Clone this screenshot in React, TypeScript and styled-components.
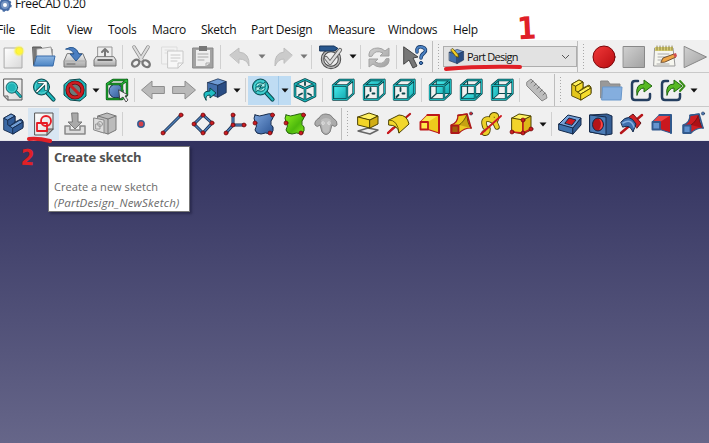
import React from 'react';
import styled, { createGlobalStyle } from 'styled-components';

const Global = createGlobalStyle`
  * { box-sizing: border-box; }
  body { margin: 0; overflow: hidden; background: #fff; font-family: "Open Sans", "Noto Sans", sans-serif; }
`;
const Window = styled.div`
  position: relative; width: 709px; height: 443px; overflow: hidden;
  display: flex; flex-direction: column; background: #fff;
`;
const TitleBar = styled.header`
  height: 19px; flex: none; display: flex; align-items: flex-start; overflow: hidden;
  font-size: 12px; line-height: 16px; letter-spacing: -0.4px; color: #111;
  svg { flex: none; margin: -7px 3px 0 -8px; }
  span { margin-top: -4px; }
`;
const MenuBar = styled.nav`
  height: 21px; flex: none; display: flex; align-items: center; margin-left: -3px;
`;
const MenuItem = styled.span<{ $w: number }>`
  flex: none; width: ${p => p.$w}px; font-size: 12px; line-height: 20px;
  letter-spacing: -0.27px; color: #111; white-space: nowrap;
`;
const Toolbar = styled.div<{ $h: number; $last?: boolean }>`
  height: ${p => p.$h}px; flex: none; display: flex; align-items: center;
  padding-top: 1px; background: #f0f0f0; border-bottom: 1px solid ${p => (p.$last ? '#e4e4ea' : '#c9c9c9')}; white-space: nowrap;
`;
const Lead = styled.div`flex: none; width: 0; margin-left: -3px;`;
const Slot = styled.button<{ $w: number; $tone?: string }>`
  flex: none; width: ${p => p.$w}px; height: 100%; padding: 0; border: 0;
  background: ${p => p.$tone ?? 'transparent'};
  display: flex; align-items: center; justify-content: center;
  svg { flex: none; display: block; overflow: visible; }
`;
const Split = styled.div`
  flex: none; display: flex; height: 29px; background: #bfdcf3;
  & > * + * { border-left: 1px solid #9fc8e8; }
`;
const Separator = styled.i<{ $w: number }>`
  flex: none; width: ${p => p.$w}px; height: 24px; display: flex; justify-content: center;
  &::before { content: ""; width: 1px; background: #d0d0d0; }
`;
const Edge = styled.i`flex: none; width: 1px; height: 100%; background: #bdbdbd;`;
const Grip = styled.i<{ $w: number }>`
  flex: none; width: ${p => p.$w}px; height: 26px; display: flex; justify-content: center;
  &::before { content: ""; width: 1px; background: repeating-linear-gradient(#a8a8a8 0 1px, #f0f0f0 1px 3px); }
`;
const Workbench = styled.button`
  flex: none; width: 134px; height: 21px; display: flex; align-items: center; padding: 0 6px 0 4px;
  border: 1px solid #adadad; background: #e2e2e2; color: #111;
  font: 11px "Open Sans", "Noto Sans", sans-serif; letter-spacing: -0.75px;
  span { flex: 1; text-align: left; margin-left: 2px; }
  svg { flex: none; }
`;
const Viewport = styled.main`flex: 1; background: linear-gradient(#32325f, #666689);`;
const Tooltip = styled.aside`
  position: absolute; left: 48px; top: 146px; width: 142px; height: 66px; padding: 2px 0 0 5px;
  background: #fff; border: 1px solid #777; box-shadow: 2px 2px 2px #20204099;
  color: #6a6a6a; white-space: nowrap; font-size: 11px; line-height: 16px;
  h3 { margin: 0 0 13px; font-size: 13px; line-height: 17px; letter-spacing: -0.17px; color: #505050; }
  p { margin: 0; letter-spacing: 0.05px; }
  em { display: block; font-size: 11.5px; letter-spacing: 0.2px; line-height: 15px; }
`;
const Note = styled.b<{ $x: number; $y: number; $size: number; $turn: number }>`
  position: absolute; left: ${p => p.$x}px; top: ${p => p.$y}px; font-size: ${p => p.$size}px; line-height: 1;
  font-family: "DejaVu Sans", sans-serif; color: #e02027; transform: rotate(${p => p.$turn}deg) scaleX(.88);
`;
const Marks = styled.svg`position: absolute; left: 0; top: 0; pointer-events: none;`;
const Defs = styled.svg`position: absolute; width: 0; height: 0;`;

type Kids = { children?: React.ReactNode; size?: number };
const Ic = ({ children, size = 24 }: Kids) => (
  <svg width={size} height={size} viewBox="0 0 24 24" fill="none" strokeLinejoin="round" strokeLinecap="round">{children}</svg>
);
const Tool = ({ w, tone, children }: { w: number; tone?: string; children: React.ReactNode }) => (
  <Slot $w={w} $tone={tone}><Ic>{children}</Ic></Slot>
);
const Drop = ({ w, color = '#111' }: { w: number; color?: string }) => (
  <Slot $w={w}><svg width="8" height="5"><path d="M.5.5h7L4 4.5z" fill={color} /></svg></Slot>
);

const T = '#1bb6ba';
const TD = '#0b464b';
const BLUE = '#3f6fae';
const BD = '#14294a';
const YD = '#4d4200';
const RED = '#cc1c22';

const Gradients = () => (
  <Defs>
    <defs>
      <linearGradient id="sheet" x2="1" y2="1"><stop stopColor="#fff" /><stop offset="1" stopColor="#d8d8d8" /></linearGradient>
      <linearGradient id="metal" x2="0" y2="1"><stop stopColor="#efefef" /><stop offset="1" stopColor="#a5a5a5" /></linearGradient>
      <linearGradient id="grey" x2="1" y2="1"><stop stopColor="#d0d0d0" /><stop offset="1" stopColor="#a2a2a2" /></linearGradient>
      <linearGradient id="folder" x2="0" y2="1"><stop stopColor="#8db6e2" /><stop offset="1" stopColor="#4b84c4" /></linearGradient>
      <linearGradient id="blue" x2="1" y2="1"><stop stopColor="#7ba4dc" /><stop offset="1" stopColor="#2c5594" /></linearGradient>
      <linearGradient id="green" x2="1" y2="1"><stop stopColor="#8cf01e" /><stop offset=".6" stopColor="#4db80c" /><stop offset="1" stopColor="#80e81c" /></linearGradient>
      <linearGradient id="yellow" x2="1" y2="1"><stop stopColor="#fff04a" /><stop offset="1" stopColor="#c9a80a" /></linearGradient>
      <linearGradient id="red" x2="1" y2="1"><stop stopColor="#f23a3a" /><stop offset="1" stopColor="#b80c10" /></linearGradient>
      <linearGradient id="teal" x2="1" y2="1"><stop stopColor="#4df0ef" /><stop offset="1" stopColor="#10a5ad" /></linearGradient>
      <radialGradient id="glow"><stop stopColor="#fff750" /><stop offset=".5" stopColor="#f6ee30" /><stop offset="1" stopColor="#fff66000" /></radialGradient>
    </defs>
  </Defs>
);

const faces: Record<string, string> = {
  front: 'M2 7.5h14v14H2z', top: 'M2 7.500 8 2h14.500l-6.500 5.500z', right: 'M16 7.500 22.500 2v14L16 21.500z',
  rear: 'M8.500 2h14v13.500h-14z', bottom: 'M2 21.500 8.500 16h14L16 21.500z', left: 'M2 7.500 8.500 2v14L2 21.500z',
};
const ViewCube = ({ face }: { face: string }) => {
  const back = 'M8.500 2v13.500h14M8.500 15.500l-6.500 6';
  const fore = 'M2 7.500h14v14H2zM2 7.500 8.500 2h14v13.500l-6.500 6M16 7.500 22.500 2';
  const hidden = face === 'rear' || face === 'bottom' || face === 'left';
  return (
    <>
      {hidden ? <path d={back} stroke={TD} strokeWidth="1.2" />
        : <path d="M8.500 10v3M4.500 19l2-2M10.500 15.500h2" stroke={TD} strokeWidth="1.8" />}
      <path d={faces[face]} fill="url(#teal)" stroke={TD} strokeWidth=".6" />
      <path d={fore} stroke={TD} strokeWidth="2.3" /><path d={fore} stroke={T} strokeWidth="1" />
    </>
  );
};
const IsoFrame = () => {
  const d = 'M12 1.500 22 6v12l-10 5-10-5V6zM2 6l10 4.500L22 6M12 10.500V23';
  return <><path d="M12 4v3M6 17l3-1.500M18 17l-3-1.500" stroke={TD} strokeWidth="1.800" /><path d={d} stroke={TD} strokeWidth="2.600" /><path d={d} stroke={T} strokeWidth="1.200" /></>;
};
const Magnifier = ({ children, x = 9.5, y = 9 }: { children?: React.ReactNode; x?: number; y?: number }) => (
  <>
    <path d={`M${x + 6} ${y + 6} 21.500 21.500`} stroke={TD} strokeWidth="4.200" /><path d={`M${x + 6} ${y + 6} 21.500 21.500`} stroke={T} strokeWidth="2.500" />
    <circle cx={x} cy={y} r="8" fill="#22b4b8" stroke={TD} /><circle cx={x} cy={y} r="6.200" stroke="#6de2e0" strokeWidth=".8" />{children}
  </>
);
const Dots = ({ at, color = RED }: { at: number[][]; color?: string }) => (
  <>{at.map(([x, y]) => <circle key={`${x},${y}`} cx={x} cy={y} r="2" fill={color} stroke="#68090c" strokeWidth=".7" />)}</>
);
const Bars = ({ d }: { d: string }) => <><path d={d} stroke={BD} strokeWidth="3" /><path d={d} stroke="#4d7fb8" strokeWidth="1.5" /></>;
const SolidBlue = () => (
  <g stroke={BD} strokeWidth=".8"><path d="m2 6 11-4 9 3-9 4z" fill="#6f9cd5" /><path d="m2 6 11 3v13L2 18z" fill="#426fac" /><path d="m13 9 9-4v12l-9 5z" fill="#294c83" /></g>
);
const Surface = ({ fill, line }: { fill: string; line: string }) => (
  <><path d="M3 3q5 2 9 0 5-2 9-1 1 4-2 7-1 4 2 6 1 4-2 7-6-2-10 0-5 0-6-4 3-4 0-8-2-4 0-7z" fill={`url(#${fill})`} stroke={line} /><Dots at={[[20.5, 3], [3, 11], [18, 21]]} /></>
);
const Stairs = ({ a, b, c, line }: { a: string; b: string; c: string; line: string }) => (
  <g stroke={line} strokeWidth=".9"><path d="m3 6 7-4 4 2v6l6-3 2 2v6l-10 7-9-4z" fill={b} /><path d="m3 6 7-4 4 2-7 4z" fill={a} /><path d="m7 8 7-4v6l-5 4-2-1z" fill={c} /><path d="m9 14 10-6 3 2-10 6z" fill={a} /><path d="m12 16 10-6v6l-10 6z" fill={c} /></g>
);
const Loft = ({ a, edge }: { a: string; edge: string }) => (
  <>
    <path d="m2.500 10 7-7H21v18l-11-3.500H2.500z" fill={a === 'red' ? '#c9181e' : '#eecb1c'} stroke={edge} strokeWidth="1.200" />
    <path d="m2.500 10 7-7H21l-11 7z" fill={a === 'red' ? '#f04242' : '#fbe84d'} />
    <path d="M9.500 3H21v18" stroke={edge} strokeWidth="2" />
    <path d="M2.500 10h7.500v7.500H2.500z" fill={a === 'red' ? '#6594cf' : '#ffe84a'} stroke={edge} strokeWidth="1.800" />
  </>
);
const Sweep = ({ a, edge, end }: { a: string; edge: string; end: string }) => (
  <>
    <path d="M2 13Q9 11 9 3l9-1q-1 8 4 14-7 0-12 5H2z" fill={a === 'red' ? '#cf1d22' : '#eccb20'} stroke={edge} strokeWidth="1.200" />
    <path d="M10 13q5-3 8-11 0 9 4 14" fill={a === 'red' ? '#ad1015' : '#c6a312'} stroke={a === 'red' ? '#631014' : YD} strokeWidth=".8" />
    <path d="M9 3.500 18 2l4 14" stroke={edge} strokeWidth="1.600" />
    <path d="M2.500 13.500h7V21h-7z" fill={a === 'red' ? '#5f91ce' : '#a35d0e'} stroke={edge} strokeWidth="1.800" />
    <circle cx="22" cy="1.500" r="1.600" fill={end} stroke={BD} strokeWidth=".5" />
  </>
);
const NewDoc = () => <><path d="M3.5 3h17.500v20H3.500z" fill="url(#sheet)" stroke="#aaa" /><circle cx="18" cy="6" r="6" fill="url(#glow)" /><circle cx="18.500" cy="6" r="3" fill="#fff53c" /></>;
const Page = () => <><path d="M3 1h18v21H7l-4-4z" fill="url(#sheet)" stroke="#555" /><path d="M3 18h4v4z" fill="#ccc" stroke="#666" /></>;
const Hat = ({ fill }: { fill: string }) => <path d="M1 9.500h12V4l10.500 9L13 22v-5.500H1z" fill={fill} stroke="#8e8e8e" />;
const LinkArrow = ({ twin }: { twin?: boolean }) => (
  <><path d="M8 3H5Q2 3 2 6v13q0 3 3 3h12q3 0 3-3v-3" stroke="#253f60" strokeWidth="2.500" /><path d="M7 17Q5 6 14 6V2l8 6-8 6v-4q-5 0-7 7z" fill="#57b922" stroke="#1f6610" />{twin && <path d="m20 3 4.500 5-4.500 5" stroke="#388d18" strokeWidth="2" />}</>
);

export default function App() {
  return (
    <Window>
      <Global /><Gradients />
      <TitleBar>
        <svg width="20" height="20" viewBox="0 0 20 20"><path d="M0 0h13v5H8v5H0z" fill="#cb2535" /><circle cx="13" cy="12" r="5" fill="#7795c2" stroke="#466ba5" strokeWidth="2" /><circle cx="13" cy="12" r="5.700" fill="none" stroke="#466ba5" strokeWidth="2" strokeDasharray="2.200 2.200" /><circle cx="13" cy="12" r="2" fill="#fff" /></svg>
        <span>FreeCAD 0.20</span>
      </TitleBar>
      <MenuBar>
        <MenuItem $w={33}>File</MenuItem><MenuItem $w={37}>Edit</MenuItem><MenuItem $w={41}>View</MenuItem><MenuItem $w={44}>Tools</MenuItem>
        <MenuItem $w={49}>Macro</MenuItem><MenuItem $w={50}>Sketch</MenuItem><MenuItem $w={77}>Part Design</MenuItem>
        <MenuItem $w={60}>Measure</MenuItem><MenuItem $w={65}>Windows</MenuItem><MenuItem $w={40}>Help</MenuItem>
      </MenuBar>

      <Toolbar $h={33}>
        <Lead />
        <Tool w={31}><NewDoc /></Tool>
        <Tool w={31}><path d="M1 2h8l2 2h9v16H2z" fill="#777" stroke="#555" /><path d="m5 4 14-2 2 13H5z" fill="#eee" stroke="#999" /><path d="M5 11h18l-2 10H2z" fill="url(#folder)" stroke="#396ba9" /></Tool>
        <Tool w={31}><path d="m4 9-3 7v6h22v-6l-3-7z" fill="url(#metal)" stroke="#777" /><path d="M1 16h22" stroke="#aaa" /><path d="M4 19h8" stroke="#666" /><path d="M3 4q9-5 13 5h3l-6 7-6-7h4Q9 4 3 4z" fill="#4b7fc2" stroke="#285891" /></Tool>
        <Tool w={30}><path d="M5 2h14v12H5z" fill="#eee" stroke="#999" /><path d="M12 5v6M9 7l3-3 3 3" stroke="#777" strokeWidth="2" /><path d="m3 12-2 3v6h22v-6l-2-3z" fill="url(#metal)" stroke="#777" /><path d="M5 15h14" stroke="#444" strokeWidth="1.500" /></Tool>
        <Separator $w={5} />
        <Tool w={31}><path d="m5 2 8 13M19 2l-8 13" stroke="#888" strokeWidth="3.500" /><path d="m5 2 8 13M19 2l-8 13" stroke="#ddd" strokeWidth="2.200" /><ellipse cx="6.500" cy="18.500" rx="4" ry="3" transform="rotate(-35 6 18)" stroke="#777" strokeWidth="2.300" /><ellipse cx="17.500" cy="18.500" rx="4" ry="3" transform="rotate(35 17 18)" stroke="#777" strokeWidth="2.300" /></Tool>
        <Tool w={32}><g opacity=".55"><path d="M2 2h15v17H2z" fill="#f4f4f4" stroke="#ccc" /><path d="M5 5h9M5 8h7" stroke="#ccc" /></g><path d="M8 6h15v12l-5 5H8z" fill="#f7f7f7" stroke="#c8c8c8" /><path d="M11 10h9M11 13h9M11 16h6M18 23v-5h5" stroke="#c8c8c8" /></Tool>
        <Tool w={30}><path d="M2 3h20v20H2z" fill="#a2a2a2" stroke="#888" /><path d="M5 5h14v13l-4 3H5z" fill="#eee" /><path d="M8 1h8v5H8z" fill="#777" /><path d="M7 9h10M7 12h10M7 15h6M15 21v-3h4" stroke="#aaa" /></Tool>
        <Separator $w={5} />
        <Tool w={33}><path d="m2 10 9-7v4q11 1 10 14-2-7-10-7v4z" fill="#cbcbcb" stroke="#bdbdbd" /></Tool>
        <Drop w={11} color="#777" />
        <Tool w={31}><path d="m21 10-8-7v4Q3 8 4 21q3-7 9-7v4z" fill="#cbcbcb" stroke="#bdbdbd" /></Tool>
        <Drop w={11} color="#777" />
        <Separator $w={5} />
        <Tool w={33}><circle cx="12" cy="14" r="8.500" fill="#eee" stroke="#444" strokeWidth="3.400" /><circle cx="12" cy="14" r="8.500" stroke="#b5b5b5" strokeWidth="1.600" /><path d="m7 13 4 5L21 5" stroke="#666" strokeWidth="4.200" /><path d="m7 13 4 5L21 5" stroke="#ddd" strokeWidth="2.300" /><path d="M1 1h14l4 2.500L15 6H1z" fill="#28578e" stroke="#17365c" /></Tool>
        <Drop w={11} /><Separator $w={5} />
        <Tool w={32}><path d="M2 11V9q1-6 9-6 4 0 7 3l4-3v8h-9l3-3q-8-4-11 3zM22 14v2q-1 6-9 6-4 0-7-3l-4 3v-8h9l-3 3q8 4 11-3z" fill="url(#grey)" stroke="#a2a2a2" /></Tool>
        <Separator $w={3} />
        <Tool w={34}><path d="m1 2 14 10-5 1 4 8-4 2-4-8-5 4z" fill="#777" stroke="#444" /><path d="M14 7q-1-6 5-5 6 2 2 6-3 2-3 5" stroke="#193b6a" strokeWidth="3.500" /><path d="M14 7q-1-6 5-5 6 2 2 6-3 2-3 5" stroke="#4b82c4" strokeWidth="1.900" /><circle cx="18" cy="18" r="1.600" fill="#4b82c4" stroke="#193b6a" /></Tool>
        <Edge /><Grip $w={10} />
        <Workbench><Ic size={17}><SolidBlue /><path d="m4 3 7 9 4 1-1-4-7-8z" fill="#f1cd27" stroke={YD} /></Ic><span>Part Design</span><svg width="9" height="6"><path d="m1 1 3.500 3.500L8 1" fill="none" stroke="#555" /></svg></Workbench>
        <Edge /><Grip $w={11} />
        <Tool w={29}><circle cx="12" cy="12" r="11" fill="url(#red)" stroke="#7c080c" /></Tool>
        <Tool w={31}><path d="M1.500 1.500h21v21h-21z" fill="url(#grey)" stroke="#888" /></Tool>
        <Tool w={31}><path d="M2 3h18l2 18H1z" fill="#f6f6ef" stroke="#999" /><path d="M2 2h18v4H2z" fill="#d7cd73" /><path d="M4 1v4m3-4v4m3-4v4m3-4v4m3-4v4m3-4v4" stroke="#776d32" strokeWidth=".8" /><path d="M5 9h11M5 12h9M5 15h5M4 19h12" stroke="#aaa" /><path d="m8 17 2-4L21 9l2 3-11 5z" fill="#efa647" stroke="#715031" /><path d="m20 9 3-1 1 3-2 2z" fill="#cf5050" /></Tool>
        <Tool w={30}><path d="m1.500 1.500 22 10.500-22 10.500z" fill="url(#grey)" stroke="#888" /></Tool>
      </Toolbar>

      <Toolbar $h={34}>
        <Lead />
        <Tool w={31}><Page /><g transform="translate(4 3) scale(.72)"><Magnifier /></g></Tool>
        <Tool w={31}><Magnifier><path d="m5 13.500 8-8m-6-1h7v7" stroke={TD} strokeWidth="3.200" /><path d="m5 13.500 8-8m-6-1h7v7" stroke="#fff" strokeWidth="1.700" /></Magnifier></Tool>
        <Tool w={31}><path d="m7 2 10-1 6 5v12l-6 5-10-1-6-5V7z" fill={T} stroke={TD} /><circle cx="12" cy="12" r="7.500" fill="#687c7c" stroke="#650d10" strokeWidth="4.200" /><circle cx="12" cy="12" r="7.500" stroke={RED} strokeWidth="2.500" /><path d="m7 7 10 10" stroke={RED} strokeWidth="3" /></Tool>
        <Drop w={12} />
        <Tool w={30}><circle cx="11" cy="13" r="7" fill="url(#blue)" stroke={BD} /><path d="M2 6h15v15H2zM2 6l6-4h14v15l-5 4M17 6l5-4" stroke="#0b4d13" strokeWidth="2.400" /><path d="M2 6h15v15H2zM2 6l6-4h14v15l-5 4M17 6l5-4" stroke="#24b837" strokeWidth="1.100" /><path d="m14 12 9 5-3 1 3 4-2 2-3-5-3 2z" fill="#eee" stroke="#333" strokeWidth=".8" /></Tool>
        <Separator $w={5} />
        <Tool w={32}><g transform="matrix(-1 0 0 1 24 -1)"><Hat fill="#b9b9b9" /></g></Tool>
        <Tool w={30}><g transform="translate(0 -1)"><Hat fill="#b9b9b9" /></g></Tool>
        <Tool w={32}><g transform="translate(3 -1) scale(.92)"><SolidBlue /></g><path d="M3 22Q-3 13 7 13v-3l6 5-6 5v-3q-5 0-4 5z" fill="#20bec4" stroke={TD} /></Tool>
        <Drop w={11} /><Separator $w={6} />
        <Split>
          <Tool w={30}><Magnifier><path d="M5 7q3-4 7-1l2-2v5H9l2-2q-3-1-4 1M14 11q-3 4-7 1l-2 2V9h5l-2 2q3 1 4-1" fill="#a4f2ee" stroke={TD} strokeWidth=".7" /></Magnifier></Tool>
          <Drop w={13} />
        </Split>
        <Tool w={28}><IsoFrame /></Tool><Separator $w={7} />
        <Tool w={33}><ViewCube face="front" /></Tool><Tool w={29}><ViewCube face="top" /></Tool><Tool w={31}><ViewCube face="right" /></Tool>
        <Separator $w={4} />
        <Tool w={34}><ViewCube face="rear" /></Tool><Tool w={28}><ViewCube face="bottom" /></Tool><Tool w={33}><ViewCube face="left" /></Tool>
        <Separator $w={2} />
        <Tool w={34}><path d="m2 4 4-3 15 15 1 4-5 3L2 8z" fill="#bdbdbd" stroke="#888" /><path d="m8 3-2 2m5 1-2 2m5 1-2 2m5 1-2 2m5 1-2 2" stroke="#777" /></Tool>
        <Edge /><Grip $w={11} />
        <Tool w={29}><Stairs a="#fff15b" b="#e4c61b" c="#f6dc2c" line={YD} /></Tool>
        <Tool w={32}><path d="M2 3h7l2 3h10v14H2z" fill="#999" stroke="#888" /><path d="M4 9h19l-1 13H3z" fill="#84aede" stroke="#6997cb" /></Tool>
        <Tool w={29}><LinkArrow /></Tool><Tool w={32}><LinkArrow twin /></Tool><Drop w={12} />
      </Toolbar>

      <Toolbar $h={34} $last>
        <Lead />
        <Tool w={31}><Stairs a="#729ed5" b="#3b68a3" c="#315b96" line={BD} /></Tool>
        <Tool w={31} tone="#d8e6f2"><g transform="translate(0 1)"><path d="M3 0h18v16l-6 6H3z" fill="url(#sheet)" stroke="#555" /><path d="M15 22v-6h6z" fill="#aaa" stroke="#555" /><circle cx="14" cy="8" r="5" stroke="#e71a24" strokeWidth="1.800" /><path d="M5 10h10v8H5z" stroke="#e71a24" strokeWidth="1.800" /></g></Tool>
        <Tool w={31}><path d="M2 14h5v4h10v-4h5v8H2z" fill="#ddd" stroke="#888" strokeWidth="1.500" /><path d="M9 1h6v9h4l-7 7-7-7h4z" fill="#a9a9a9" stroke="#777" /></Tool>
        <Tool w={30}><path d="m5 4 9-3 9 3v14l-8 4-10-3z" fill="#bbb" stroke="#777" /><path d="M5 4 15 7v15M15 7l8-3" stroke="#777" /><path d="m1 6 10 2v13L1 18z" fill="#ddd" stroke="#888" /><circle cx="7" cy="12" r="2.500" stroke="#999" /><path d="M3 12h4v5H3z" stroke="#999" /></Tool>
        <Separator $w={5} />
        <Tool w={32}><circle cx="12" cy="12" r="3.200" fill="#d3414a" stroke="#355c91" strokeWidth="1.500" /></Tool>
        <Tool w={30}><Bars d="M3 21 21 3" /><Dots at={[[3, 21], [21, 3]]} /></Tool>
        <Tool w={31}><Bars d="m12 3 9 8-9 10-9-9z" /><Dots at={[[12, 3], [21, 11], [12, 21], [3, 12]]} /></Tool>
        <Tool w={31}><Bars d="M11 3v10h11M11 13l-7 8" /><Dots at={[[11, 3], [11, 13], [22, 13], [4, 21]]} /></Tool>
        <Tool w={30}><Surface fill="blue" line={BD} /></Tool><Tool w={31}><Surface fill="green" line="#24610c" /></Tool>
        <Tool w={31}><path d="M5 6Q0 9 1 13q2 3 5 0l2 7q4 5 8 0l2-7q3 3 5 0 1-4-4-7-2-4-7-4T5 6z" fill="#ababab" stroke="#808080" /><path d="M7 8q5-4 10 0l-2 11q-3 4-6 0z" fill="#bdbdbd" /><circle cx="9" cy="11" r="1.500" fill="#fff" /><circle cx="15" cy="11" r="1.500" fill="#fff" /><path d="M9 11h.1M15 11h.1" stroke="#333" /></Tool>
        <Edge /><Grip $w={11} />
        <Tool w={30}><path d="m2 19 10-3 10 2-8 4z" fill="#eee" stroke="#666" strokeWidth="1.400" /><g stroke={YD}><path d="m2 5 11-4 9 3-8 4z" fill="#fff164" /><path d="m2 5 12 3v8L2 13z" fill="#f2d427" /><path d="m14 8 8-4v8l-8 4z" fill="#d1ad15" /></g></Tool>
        <Tool w={31}><path d="M1 21 23 2" stroke="#b51519" strokeWidth="2.200" /><path d="m2 8 10-5q8 0 10 9l-10 9q-1-8-10-8z" fill="#f2d72d" stroke={YD} /><path d="M2 8q9 0 10 13" stroke={YD} strokeWidth=".8" /><path d="m1 21 5-5" stroke={RED} strokeWidth="2" /></Tool>
        <Tool w={31}><Loft a="yellow" edge="#bd1919" /></Tool>
        <Tool w={31}><Sweep a="yellow" edge="#ae1919" end="#cf2529" /></Tool>
        <Tool w={29}><g fill="none"><path d="M6 15Q3 7 9 7q7 1 9 8M15 8q-4-3-1-5 5-1 3 5M9 17q0 5-4 4" stroke={YD} strokeWidth="5.500" /><path d="M6 15Q3 7 9 7q7 1 9 8M15 8q-4-3-1-5 5-1 3 5M9 17q0 5-4 4" stroke="#ecd029" strokeWidth="3.800" /></g><path d="M2 22 22 4" stroke={RED} strokeWidth="1.900" /></Tool>
        <Tool w={32}><g stroke={YD}><path d="m3 6 7-4 12 2-8 5z" fill="#fff262" /><path d="m3 6 11 2v14L3 20z" fill="#f2d42b" /><path d="m14 8 8-4v14l-8 4z" fill="#dcb918" /></g><path d="M14 8v13M3 20l11 1 8-4" stroke={RED} strokeWidth="1.500" /><Dots at={[[14, 8], [3, 20], [14, 21], [22, 17]]} /></Tool>
        <Drop w={12} /><Separator $w={5} />
        <Tool w={32}><g stroke={BD}><path d="m1 12 9-9 13 3-8 10z" fill="#77a3d9" /><path d="m1 12 14 4v6L1 18z" fill="#3f73ae" /><path d="m15 16 8-10v7l-8 9z" fill="#315d94" /><path d="m7 11 4-5 7 2-4 5z" fill="#cf1b21" /></g></Tool>
        <Tool w={30}><g stroke={BD}><path d="m1 3 17-1 5 2v18l-6 1-16-3z" fill="#355e94" /><path d="m1 3 16 2v18L1 20z" fill="#4c7db7" /><ellipse cx="9" cy="12.500" rx="5.500" ry="6.500" fill="#b31419" /></g><path d="M10 7q4 5 0 11 5-2 3.500-7-1.500-4-3.500-4" fill="#fa4644" /></Tool>
        <Tool w={30}><path d="M2 21 23 3" stroke="#b51519" strokeWidth="2.500" /><path d="m10 5 4-3 8 9-4 5z" fill="#d32025" stroke="#641015" /><path d="M2 10Q10 0 17 12l-3 8q-3-8-10-5z" fill={BLUE} stroke={BD} /><path d="M4 11q8-5 11 4" stroke="#84afe0" strokeWidth="1.500" /></Tool>
        <Tool w={31}><Loft a="red" edge="#31598d" /></Tool>
        <Tool w={32}><Sweep a="red" edge="#31598d" end="#4f7ab2" /></Tool>
      </Toolbar>
      <Viewport />

      <Tooltip><h3>Create sketch</h3><p>Create a new sketch</p><em>(PartDesign_NewSketch)</em></Tooltip>
      <Note $x={516} $y={13} $size={31} $turn={-3}>1</Note>
      <Note $x={20} $y={147} $size={22} $turn={3}>2</Note>
      <Marks width="709" height="443" fill="none" stroke="#e02027" strokeWidth="4" strokeLinecap="round"><path d="M446 69q32-3 74-2M29 139q9-1 21 2" /></Marks>
    </Window>
  );
}
